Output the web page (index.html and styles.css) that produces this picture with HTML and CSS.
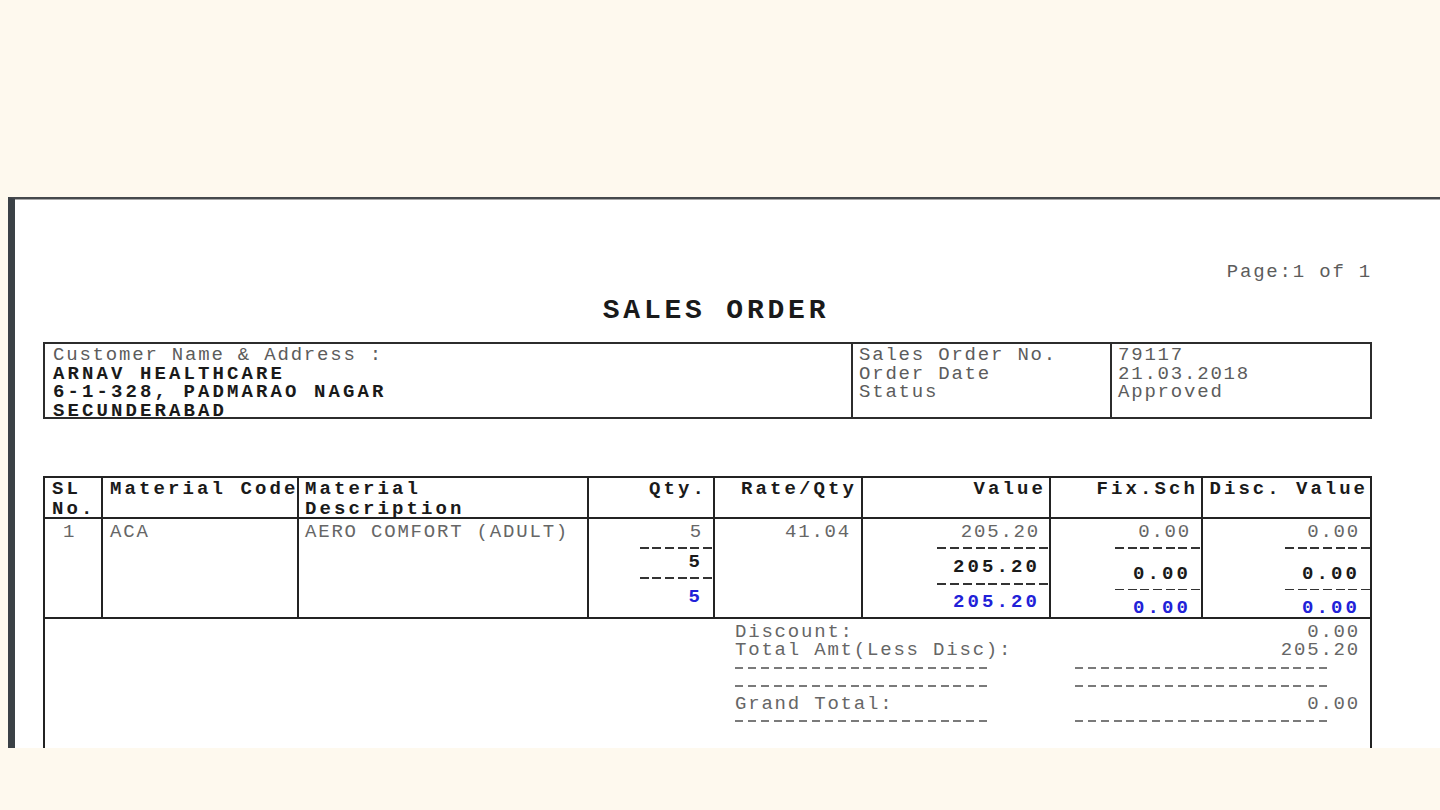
FILE: index.html
```html
<!DOCTYPE html>
<html lang="en">
<head>
<meta charset="utf-8">
<title>Sales Order</title>
<link rel="stylesheet" href="styles.css">
</head>
<body>
<div class="frame">
  <div class="doc">
    <div class="pageno">Page:1 of 1</div>
    <h1 class="title">SALES ORDER</h1>

    <div class="head-box">
      <div class="hb-cell hb-cust">
        <div>Customer Name &amp; Address :</div>
        <div class="strong">ARNAV HEALTHCARE</div>
        <div class="strong">6-1-328, PADMARAO NAGAR</div>
        <div class="strong">SECUNDERABAD</div>
      </div>
      <div class="hb-cell">
        <div>Sales Order No.</div>
        <div>Order Date</div>
        <div>Status</div>
      </div>
      <div class="hb-cell">
        <div>79117</div>
        <div>21.03.2018</div>
        <div>Approved</div>
      </div>
    </div>

    <div class="items">
      <div class="row head">
        <div class="c c-sl">SL<br>No.</div>
        <div class="c c-code">Material Code</div>
        <div class="c c-desc">Material<br>Description</div>
        <div class="c c-right c-qty">Qty.</div>
        <div class="c c-right c-rate">Rate/Qty</div>
        <div class="c c-right c-val">Value</div>
        <div class="c c-right c-fix">Fix.Sch</div>
        <div class="c c-right c-disc">Disc. Value</div>
      </div>
      <div class="row body">
        <div class="c c-sl">1</div>
        <div class="c c-code">ACA</div>
        <div class="c c-desc">AERO COMFORT (ADULT)</div>
        <div class="c num c-qty">
          <div class="v">5</div>
          <div class="dash d1"></div>
          <div class="v b">5</div>
          <div class="dash d2"></div>
          <div class="v blue">5</div>
        </div>
        <div class="c num c-rate">
          <div class="v">41.04</div>
        </div>
        <div class="c num c-val">
          <div class="v">205.20</div>
          <div class="dash d1"></div>
          <div class="v b">205.20</div>
          <div class="dash d2"></div>
          <div class="v blue">205.20</div>
        </div>
        <div class="c num c-fix">
          <div class="v">0.00</div>
          <div class="dash d1"></div>
          <div class="v b">0.00</div>
          <div class="dash d2"></div>
          <div class="v blue">0.00</div>
        </div>
        <div class="c num c-disc">
          <div class="v">0.00</div>
          <div class="dash d1"></div>
          <div class="v b">0.00</div>
          <div class="dash d2"></div>
          <div class="v blue">0.00</div>
        </div>
      </div>
      <div class="summary">
        <div class="s-label">Discount:</div>
        <div class="s-val">0.00</div>
        <div class="s-label">Total Amt(Less Disc):</div>
        <div class="s-val">205.20</div>
        <div class="s-label"><div class="sdash"></div></div>
        <div class="s-val"><div class="sdash"></div></div>
        <div class="s-label"><div class="sdash"></div></div>
        <div class="s-val"><div class="sdash"></div></div>
        <div class="s-label">Grand Total:</div>
        <div class="s-val">0.00</div>
        <div class="s-label"><div class="sdash low"></div></div>
        <div class="s-val"><div class="sdash low"></div></div>
      </div>
    </div>
  </div>
</div>
</body>
</html>
```

FILE: styles.css
```css
html, body {
  margin: 0;
  padding: 0;
}

body {
  background: #fef9ee;
  width: 1440px;
  height: 810px;
  overflow: hidden;
}

.frame {
  padding: 197px 0 0 8px;
}

.doc {
  box-sizing: border-box;
  height: 551px;
  background: #ffffff;
  border-top: 2px solid #46494c;
  border-left: 7px solid #3b4146;
  box-shadow: inset 0 1px 0 #a8a8a8;
  overflow: hidden;
  padding: 64px 68px 0 28px;
  font-family: "Liberation Mono", "Courier New", monospace;
  font-size: 19px;
  line-height: 18px;
  letter-spacing: 1.8px;
  color: #5c5c5c;
}

.pageno {
  text-align: right;
  height: 18px;
}

.title {
  margin: 16px 0 0;
  padding-left: 17px;
  font-size: 28px;
  line-height: 27px;
  font-weight: 700;
  letter-spacing: 3.8px;
  text-align: center;
  color: #1a1a1a;
}

.strong {
  font-weight: 700;
  color: #1a1a1a;
  letter-spacing: 3.1px;
}

/* ---------- header box ---------- */
.head-box {
  margin-top: 18px;
  box-sizing: border-box;
  height: 77px;
  border: 2px solid #2c2c2c;
  display: grid;
  grid-template-columns: 808px 259px 1fr;
  grid-template-rows: minmax(0, 1fr);
}

.hb-cell {
  box-sizing: border-box;
  padding: 2px 0 0 6px;
  line-height: 18.5px;
  border-right: 2px solid #2c2c2c;
  white-space: nowrap;
}

.hb-cell:last-child {
  border-right: 0;
}

.hb-cust {
  padding-left: 8px;
}

/* ---------- items table ---------- */
.items {
  margin-top: 57px;
  border: 2px solid #232323;
  border-bottom: 0;
}

.row {
  display: grid;
  grid-template-columns: 58px 196px 290px 126px 148px 188px 152px 1fr;
  grid-template-rows: minmax(0, 1fr);
  box-sizing: border-box;
  border-bottom: 2px solid #232323;
}

.row.head {
  height: 41px;
}

.row.body {
  height: 100px;
}

.c {
  box-sizing: border-box;
  border-right: 2px solid #232323;
  white-space: nowrap;
  min-width: 0;
}

.c:last-child {
  border-right: 0;
}

.head .c {
  padding-top: 2px;
  line-height: 19.5px;
  font-weight: 700;
  color: #1a1a1a;
  letter-spacing: 3.1px;
}

.head .c-sl { padding-left: 7px; }
.head .c-code { padding-left: 7px; }
.head .c-desc { padding-left: 6px; }
.head .c-right { text-align: right; }
.head .c-qty { padding-right: 6px; }
.head .c-rate { padding-right: 4px; }
.head .c-val { padding-right: 3px; }
.head .c-fix { padding-right: 3px; }
.head .c-disc { padding-right: 2px; letter-spacing: 3px; }

.body .c {
  padding-top: 4px;
  color: #666666;
}

.body .c-sl { padding-left: 18px; }
.body .c-code { padding-left: 7px; }
.body .c-desc { padding-left: 6px; }

.num {
  display: flex;
  flex-direction: column;
  align-items: flex-end;
  padding-right: 10px;
}

.body .c-val { padding-right: 9px; }

.v {
  height: 18px;
}

.v.b {
  font-weight: 700;
  color: #1a1a1a;
  letter-spacing: 3.1px;
}

.v.blue {
  font-weight: 700;
  color: #2121d8;
  letter-spacing: 3.1px;
}

.dash {
  height: 2px;
  background: repeating-linear-gradient(to left, #333333 0 9px, transparent 9px 12.7px);
}

.dash.d1 { margin-top: 6px; }

/* Qty column */
.c-qty .dash { width: 74px; margin-right: -9px; }
.c-qty .v.b { margin-top: 4px; }
.c-qty .dash.d2 { margin-top: 6px; }
.c-qty .v.blue { margin-top: 9px; }

/* Value column */
.c-val .dash { width: 113px; margin-right: -8px; }
.c-val .v.b { margin-top: 9px; }
.c-val .dash.d2 { margin-top: 7px; }
.c-val .v.blue { margin-top: 8px; }

/* Fix.Sch and Disc. Value columns */
.c-fix .dash { width: 87px; margin-right: -9px; }
.c-disc .dash { width: 88px; margin-right: -10px; }
.c-fix .v.b, .c-disc .v.b { margin-top: 16px; }
.c-fix .dash.d2, .c-disc .dash.d2 { margin-top: 6px; }
.c-fix .v.blue, .c-disc .v.blue { margin-top: 9px; }

/* ---------- summary ---------- */
.summary {
  height: 200px;
  box-sizing: border-box;
  padding: 4px 0 0 690px;
  display: grid;
  grid-template-columns: 340px 1fr;
  grid-auto-rows: 18px;
  align-content: start;
  color: #666666;
}

.s-label {
  white-space: nowrap;
}

.s-val {
  text-align: right;
  padding-right: 10px;
}

.sdash {
  width: 257px;
  height: 1.5px;
  margin-top: 8px;
  background: repeating-linear-gradient(to right, #7a7a7a 0 8px, transparent 8px 12.85px);
}

.sdash.low {
  margin-top: 7px;
}
```
